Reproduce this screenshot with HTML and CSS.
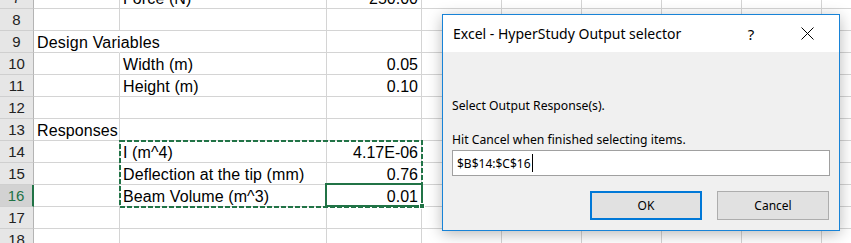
FILE: index.html
```html
<!DOCTYPE html>
<html lang="en">
<head>
    <meta charset="UTF-8">
    <title>Excel - HyperStudy Output selector</title>
    <link rel="stylesheet" href="styles.css">
</head>
<body>
    <div class="sheet">
        <!-- Worksheet rows 7 to 18 -->
        <div class="rows">
            <div class="row"><div class="hd">7</div><div class="c a"></div><div class="c b">Force (N)</div><div class="c n">250.00</div><div class="c d"></div><div class="c d"></div><div class="c d"></div><div class="c d"></div><div class="c d"></div><div class="c d"></div></div>
            <div class="row"><div class="hd">8</div><div class="c a"></div><div class="c b"></div><div class="c n"></div><div class="c d"></div><div class="c d"></div><div class="c d"></div><div class="c d"></div><div class="c d"></div><div class="c d"></div></div>
            <div class="row"><div class="hd">9</div><div class="c a spill">Design Variables</div><div class="c b"></div><div class="c n"></div><div class="c d"></div><div class="c d"></div><div class="c d"></div><div class="c d"></div><div class="c d"></div><div class="c d"></div></div>
            <div class="row"><div class="hd">10</div><div class="c a"></div><div class="c b">Width (m)</div><div class="c n">0.05</div><div class="c d"></div><div class="c d"></div><div class="c d"></div><div class="c d"></div><div class="c d"></div><div class="c d"></div></div>
            <div class="row"><div class="hd">11</div><div class="c a"></div><div class="c b">Height (m)</div><div class="c n">0.10</div><div class="c d"></div><div class="c d"></div><div class="c d"></div><div class="c d"></div><div class="c d"></div><div class="c d"></div></div>
            <div class="row"><div class="hd">12</div><div class="c a"></div><div class="c b"></div><div class="c n"></div><div class="c d"></div><div class="c d"></div><div class="c d"></div><div class="c d"></div><div class="c d"></div><div class="c d"></div></div>
            <div class="row"><div class="hd">13</div><div class="c a">Responses</div><div class="c b"></div><div class="c n"></div><div class="c d"></div><div class="c d"></div><div class="c d"></div><div class="c d"></div><div class="c d"></div><div class="c d"></div></div>
            <div class="row"><div class="hd">14</div><div class="c a"></div><div class="c b">I (m^4)</div><div class="c n">4.17E-06</div><div class="c d"></div><div class="c d"></div><div class="c d"></div><div class="c d"></div><div class="c d"></div><div class="c d"></div></div>
            <div class="row"><div class="hd">15</div><div class="c a"></div><div class="c b">Deflection at the tip (mm)</div><div class="c n">0.76</div><div class="c d"></div><div class="c d"></div><div class="c d"></div><div class="c d"></div><div class="c d"></div><div class="c d"></div></div>
            <div class="row"><div class="hd active">16</div><div class="c a"></div><div class="c b">Beam Volume (m^3)</div><div class="c n">0.01</div><div class="c d"></div><div class="c d"></div><div class="c d"></div><div class="c d"></div><div class="c d"></div><div class="c d"></div></div>
            <div class="row"><div class="hd">17</div><div class="c a"></div><div class="c b"></div><div class="c n"></div><div class="c d"></div><div class="c d"></div><div class="c d"></div><div class="c d"></div><div class="c d"></div><div class="c d"></div></div>
            <div class="row"><div class="hd">18</div><div class="c a"></div><div class="c b"></div><div class="c n"></div><div class="c d"></div><div class="c d"></div><div class="c d"></div><div class="c d"></div><div class="c d"></div><div class="c d"></div></div>
        </div>

        <!-- Copy range B14:C16 (marching ants) -->
        <svg class="copy-range" width="304" height="68" viewBox="0 0 304 68">
            <rect x="1" y="1" width="302" height="66" fill="none" stroke="#217346" stroke-width="2" stroke-dasharray="5 2"></rect>
        </svg>
        <!-- Active cell C16 -->
        <div class="active-cell"><span class="fill-handle"></span></div>

        <!-- Input box dialog -->
        <div class="dialog">
            <div class="dialog-title">
                <span class="title-text">Excel - HyperStudy Output selector</span>
                <span class="help">?</span>
                <svg class="close" width="13" height="13" viewBox="0 0 13 13">
                    <path d="M0.5 0.5 L12.5 12.5 M12.5 0.5 L0.5 12.5" stroke="#000" stroke-width="1" fill="none"></path>
                </svg>
            </div>
            <div class="dialog-body">
                <p class="prompt">Select Output Response(s).</p>
                <p class="prompt second">Hit Cancel when finished selecting items.</p>
                <div class="ref-input">$B$14:$C$16<span class="caret"></span></div>
                <div class="buttons">
                    <button class="dlg-btn default">OK</button>
                    <button class="dlg-btn">Cancel</button>
                </div>
            </div>
        </div>
    </div>
</body>
</html>
```

FILE: styles.css
```css
* { margin: 0; padding: 0; box-sizing: border-box; }
body { background: #fff; font-family: "Liberation Sans", Arial, sans-serif; }

/* Worksheet */
.sheet { position: relative; width: 851px; height: 243px; overflow: hidden; }
.rows { margin-top: -13px; }
.row { display: flex; height: 22px; }
.row > div { flex: none; height: 22px; line-height: 22px; white-space: nowrap; }
.hd { width: 34px; background: #e6e6e6; color: #222; font-size: 15px; text-align: center; border-right: 1px solid #b4b4b4; border-bottom: 1px solid #cfcfcf; }
.hd.active { background: #d2d2d2; color: #217346; border-right: 2px solid #217346; }
.c { border-right: 1px solid #d4d4d4; border-bottom: 1px solid #d4d4d4; padding: 1px 3px 0; color: #000; font-size: 16px; letter-spacing: 0.1px; }
.c.a { width: 86px; }
.c.b { width: 207px; }
.c.n { width: 95px; text-align: right; letter-spacing: 0; }
.c.d { width: 80px; }
.c.spill { border-right-color: transparent; overflow: visible; letter-spacing: 0.2px; }

/* Selection overlays */
.copy-range { position: absolute; left: 119px; top: 140px; }
.active-cell { position: absolute; left: 325px; top: 183px; width: 98px; height: 24px; border: 2px solid #217346; }
.fill-handle { position: absolute; right: -4px; bottom: -4px; width: 6px; height: 6px; background: #217346; border: 1px solid #fff; }

/* Dialog */
.dialog { position: absolute; left: 442px; top: 14px; width: 398px; height: 217px; background: #f0f0f0; border: 1px solid #1883d7; box-shadow: 0 3px 14px rgba(0,0,0,0.28); display: flex; flex-direction: column; font-family: "Noto Sans", "Open Sans", sans-serif; color: #000; }
.dialog-title { height: 37px; background: #fff; display: flex; align-items: center; padding-left: 10px; font-size: 14px; }
.title-text { flex: 1; }
.help { width: 20px; margin-right: 40px; text-align: center; font-size: 15px; }
.close { margin-right: 25px; }
.dialog-body { flex: 1; padding: 45px 9px 0; font-size: 12.2px; }
.prompt { height: 18px; line-height: 18px; }
.prompt.second { margin-top: 16px; }
.ref-input { margin-top: 1px; height: 26px; background: #fff; border: 1px solid #a0a0a0; padding-left: 4px; display: flex; align-items: center; font-size: 12px; }
.caret { width: 1px; height: 18px; background: #000; margin-left: 1px; }
.buttons { display: flex; justify-content: flex-end; gap: 15px; margin-top: 15px; padding-right: 1px; }
.dlg-btn { width: 112px; height: 29px; background: #e1e1e1; border: 1px solid #adadad; font-family: inherit; font-size: 12px; color: #000; }
.dlg-btn.default { border: 2px solid #0078d7; }
```
